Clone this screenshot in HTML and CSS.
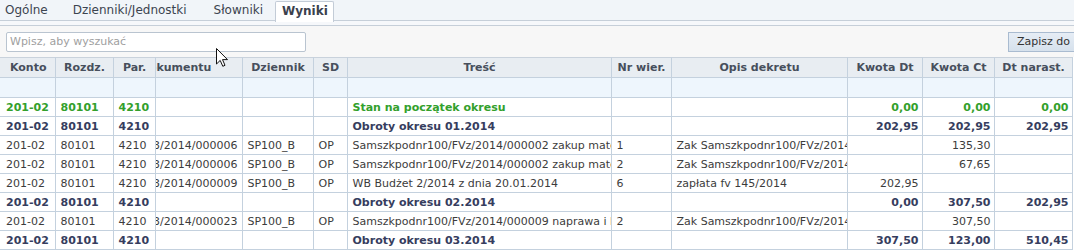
FILE: index.html
```html
<!DOCTYPE html>
<html lang="pl">
<head>
  <meta charset="UTF-8">
  <title>Wyniki</title>
  <link rel="stylesheet" href="styles.css">
</head>
<body>
  <div class="tabs">
    <span class="tab t1">Ogólne</span>
    <span class="tab t2">Dzienniki/Jednostki</span>
    <span class="tab t3">Słowniki</span>
    <span class="tab active">Wyniki</span>
  </div>
  <div class="spacer"></div>
  <div class="toolbar">
    <input class="search" type="text" placeholder="Wpisz, aby wyszukać">
    <button class="save">Zapisz do</button>
  </div>

  <table class="grid">
    <colgroup>
      <col style="width:55px"><col style="width:58px"><col style="width:42px"><col style="width:87px">
      <col style="width:71px"><col style="width:34px"><col style="width:264px"><col style="width:60px">
      <col style="width:176px"><col style="width:75px"><col style="width:72px"><col style="width:78px">
    </colgroup>
    <thead>
      <tr class="head">
        <th>Konto</th><th>Rozdz.</th><th>Par.</th><th class="doc"><span class="shift">Nr dokumentu</span></th>
        <th>Dziennik</th><th>SD</th><th>Treść</th><th>Nr wier.</th>
        <th>Opis dekretu</th><th>Kwota Dt</th><th>Kwota Ct</th><th>Dt narast.</th>
      </tr>
      <tr class="filter">
        <td></td><td></td><td></td><td></td><td></td><td></td><td></td><td></td><td></td><td></td><td></td><td></td>
      </tr>
    </thead>
    <tbody>
      <tr class="start">
        <td>201-02</td><td>80101</td><td>4210</td><td></td><td></td><td></td>
        <td>Stan na początek okresu</td><td></td><td></td>
        <td class="num">0,00</td><td class="num">0,00</td><td class="num">0,00</td>
      </tr>
      <tr class="sum">
        <td>201-02</td><td>80101</td><td>4210</td><td></td><td></td><td></td>
        <td>Obroty okresu 01.2014</td><td></td><td></td>
        <td class="num">202,95</td><td class="num">202,95</td><td class="num">202,95</td>
      </tr>
      <tr>
        <td>201-02</td><td>80101</td><td>4210</td><td class="doc"><div class="clip">FVz/2013/2014/000006</div></td><td>SP100_B</td><td>OP</td>
        <td>Samszkpodnr100/FVz/2014/000002 zakup materiałów</td><td>1</td><td>Zak Samszkpodnr100/FVz/2014/000002</td>
        <td class="num"></td><td class="num">135,30</td><td class="num"></td>
      </tr>
      <tr>
        <td>201-02</td><td>80101</td><td>4210</td><td class="doc"><div class="clip">FVz/2013/2014/000006</div></td><td>SP100_B</td><td>OP</td>
        <td>Samszkpodnr100/FVz/2014/000002 zakup materiałów</td><td>2</td><td>Zak Samszkpodnr100/FVz/2014/000002</td>
        <td class="num"></td><td class="num">67,65</td><td class="num"></td>
      </tr>
      <tr>
        <td>201-02</td><td>80101</td><td>4210</td><td class="doc"><div class="clip">FVz/2013/2014/000009</div></td><td>SP100_B</td><td>OP</td>
        <td>WB Budżet 2/2014 z dnia 20.01.2014</td><td>6</td><td>zapłata fv 145/2014</td>
        <td class="num">202,95</td><td class="num"></td><td class="num"></td>
      </tr>
      <tr class="sum">
        <td>201-02</td><td>80101</td><td>4210</td><td></td><td></td><td></td>
        <td>Obroty okresu 02.2014</td><td></td><td></td>
        <td class="num">0,00</td><td class="num">307,50</td><td class="num">202,95</td>
      </tr>
      <tr>
        <td>201-02</td><td>80101</td><td>4210</td><td class="doc"><div class="clip">FVz/2013/2014/000023</div></td><td>SP100_B</td><td>OP</td>
        <td>Samszkpodnr100/FVz/2014/000009 naprawa i konserwacja</td><td>2</td><td>Zak Samszkpodnr100/FVz/2014/000009</td>
        <td class="num"></td><td class="num">307,50</td><td class="num"></td>
      </tr>
      <tr class="sum">
        <td>201-02</td><td>80101</td><td>4210</td><td></td><td></td><td></td>
        <td>Obroty okresu 03.2014</td><td></td><td></td>
        <td class="num">307,50</td><td class="num">123,00</td><td class="num">510,45</td>
      </tr>
    </tbody>
  </table>

  <svg class="cursor" width="13" height="20" viewBox="0 0 13 20">
    <path d="M0.5 0.5 L0.5 16 L4.2 12.4 L6.8 18.3 L9 17.3 L6.5 11.6 L11.5 11.6 Z" fill="#fff" stroke="#111" stroke-width="1"/>
  </svg>
</body>
</html>
```

FILE: styles.css
```css
/* Zakładka Wyniki */
body {
  margin: 0;
  background-color: #fff;
  font-family: "DejaVu Sans", Verdana, sans-serif;
  font-size: 11px;
  color: #3c3c3c;
  position: relative;
}
.tabs {
  display: flex;
  height: 20px;
  background-color: #f1f5f9;
  border-bottom: 1px solid #c6cfd9;
  padding-left: 0;
}
.tab {
  font-size: 12px;
  line-height: 20px;
  padding: 0 5px;
  color: #3c4450;
}
.t2 { margin-left: 15px; }
.t3 { margin-left: 17px; }
.tab.active {
  margin-left: 7px;
  height: 20px;
  margin-top: 1px;
  line-height: 19px;
  padding: 0 5px 0 6px;
  background-color: #fff;
  border: 1px solid #c3ccd7;
  border-bottom: none;
  border-radius: 2px 2px 0 0;
  font-weight: bold;
  color: #3a414d;
}
.spacer {
  height: 4px;
  background-color: #f6f8fb;
  border-bottom: 1px solid #c6cfd9;
}
.toolbar {
  height: 31px;
  background-color: #f7f7f7;
  display: flex;
  align-items: center;
  justify-content: space-between;
  padding-left: 6px;
  overflow: hidden;
}
.search {
  width: 300px;
  height: 20px;
  box-sizing: border-box;
  border: 1px solid #b9c4d0;
  border-radius: 2px;
  padding: 0 3px;
  font-family: "DejaVu Sans", Verdana, sans-serif;
  font-size: 11px;
  background-color: #fff;
}
.search::placeholder {
  color: #a0a0a0;
}
.save {
  flex: none;
  width: 90px;
  height: 20px;
  margin-right: -24px;
  text-align: left;
  padding: 0 0 0 8px;
  border: 1px solid #a9bbd0;
  background: linear-gradient(#e6edf5, #d6e1ec);
  font-family: "DejaVu Sans", Verdana, sans-serif;
  font-size: 11px;
  color: #333;
  white-space: nowrap;
  overflow: hidden;
}
.grid {
  border-collapse: collapse;
  table-layout: fixed;
  width: 1072px;
}
.grid th, .grid td {
  border: 1px solid #c4d1de;
  white-space: nowrap;
  overflow: hidden;
  text-overflow: clip;
  padding: 0 4px 0 5px;
}
.grid tr > :first-child {
  border-left: none;
  padding-left: 6px;
}
.head th {
  height: 19px;
  background-color: #e8edf2;
  font-weight: bold;
  color: #474f5c;
  text-align: center;
  border-top-color: #c9d2dc;
}
.grid .doc {
  text-align: left;
  padding: 0 4px 0 0;
}
.head .doc {
  padding: 0;
}
.shift {
  display: inline-block;
  margin-left: -33px;
}
.filter td {
  height: 19px;
  background-color: #eef6fd;
}
tbody td {
  height: 18px;
}
.clip {
  display: flex;
  justify-content: flex-end;
  overflow: hidden;
}
.num {
  text-align: right;
  padding-right: 3px !important;
}
.start td {
  color: #33a02c;
  font-weight: bold;
}
.sum td {
  color: #363d5e;
  font-weight: bold;
}
.cursor {
  position: absolute;
  left: 216px;
  top: 48px;
}
```
